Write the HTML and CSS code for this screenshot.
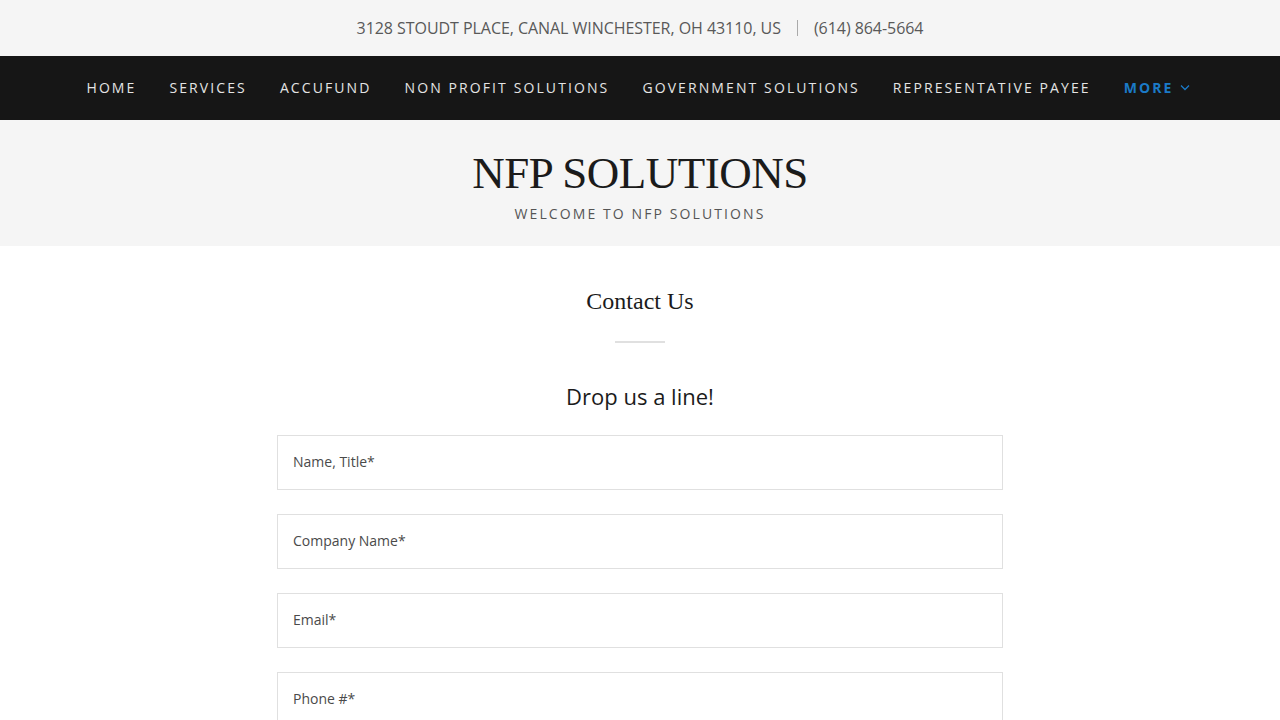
FILE: index.html
```html
<!DOCTYPE html>
<html lang="en">
<head>
    <meta charset="UTF-8">
    <meta name="viewport" content="width=device-width, initial-scale=1.0">
    <title>NFP Solutions - Contact Us</title>
    <link rel="stylesheet" href="styles.css">
</head>
<body>
    <div class="topbar">
        <span class="address">3128 Stoudt Place, Canal Winchester, OH 43110, US</span>
        <span class="sep"></span>
        <span class="phone">(614) 864-5664</span>
    </div>

    <nav class="mainnav">
        <a href="#">Home</a>
        <a href="#">Services</a>
        <a href="#">AccuFund</a>
        <a href="#">Non Profit Solutions</a>
        <a href="#">Government Solutions</a>
        <a href="#">Representative Payee</a>
        <a href="#" class="more">More
            <svg width="10" height="7" viewBox="0 0 10 7"><path d="M1 1.5l4 4 4-4" fill="none" stroke="currentColor" stroke-width="1.3"/></svg>
        </a>
    </nav>

    <header class="hero">
        <h1>NFP SOLUTIONS</h1>
        <div class="tagline">Welcome to NFP Solutions</div>
    </header>

    <section class="contact">
        <h2>Contact Us</h2>
        <hr class="divider">
        <h3>Drop us a line!</h3>
        <form class="contact-form">
            <input type="text" placeholder="Name, Title*">
            <input type="text" placeholder="Company Name*">
            <input type="email" placeholder="Email*">
            <input type="tel" placeholder="Phone #*">
        </form>
    </section>
</body>
</html>
```

FILE: styles.css
```css
* {
    margin: 0;
    padding: 0;
    box-sizing: border-box;
}

body {
    font-family: "Open Sans", "Liberation Sans", sans-serif;
    background: #fff;
    color: #1b1b1b;
    -webkit-font-smoothing: antialiased;
}

.topbar {
    height: 56px;
    background: #f5f5f5;
    display: flex;
    align-items: center;
    justify-content: center;
    font-size: 16px;
    letter-spacing: -0.05px;
    color: #595959;
}

.address {
    text-transform: uppercase;
}

.sep {
    width: 1px;
    height: 16px;
    background: #aaa;
    margin: 0 16px;
}

.mainnav {
    height: 64px;
    background: #161616;
    display: flex;
    align-items: center;
    justify-content: center;
    gap: 33px;
    padding: 0 4px 1px 0;
}

.mainnav a {
    color: #e4e4e4;
    text-decoration: none;
    text-transform: uppercase;
    font-size: 14px;
    letter-spacing: 2.1px;
    display: flex;
    align-items: center;
    gap: 6px;
}

.mainnav a.more {
    color: #1b7ac7;
    font-weight: 700;
}

.hero {
    height: 126px;
    background: #f5f5f5;
    text-align: center;
    padding-top: 26px;
}

.hero h1 {
    font-family: "Liberation Serif", "DejaVu Serif", serif;
    font-weight: 400;
    font-size: 45px;
    line-height: 54px;
    letter-spacing: -0.5px;
    color: #1b1b1b;
}

.tagline {
    margin-top: 4px;
    font-size: 14px;
    letter-spacing: 2.1px;
    text-transform: uppercase;
    color: #555;
}

.contact {
    text-align: center;
    padding-top: 40px;
}

.contact h2 {
    font-family: "Liberation Serif", "DejaVu Serif", serif;
    font-weight: 400;
    font-size: 24px;
    line-height: 30px;
    color: #1b1b1b;
}

.divider {
    width: 50px;
    margin: 25px auto 0;
    border: 0;
    border-top: 2px solid #e0e0e0;
}

.contact h3 {
    margin-top: 38px;
    font-weight: 400;
    font-size: 22px;
    line-height: 30px;
}

.contact-form {
    width: 726px;
    margin: 24px auto 0;
    display: flex;
    flex-direction: column;
    gap: 24px;
}

.contact-form input {
    height: 55px;
    border: 1px solid #e0e0e0;
    border-radius: 0;
    padding: 0 15px 2px;
    font-family: "Open Sans", "Liberation Sans", sans-serif;
    font-size: 14px;
    color: #1b1b1b;
    background: #fff;
    outline: 0;
}

.contact-form input::placeholder {
    color: #4a4a4a;
}
```
